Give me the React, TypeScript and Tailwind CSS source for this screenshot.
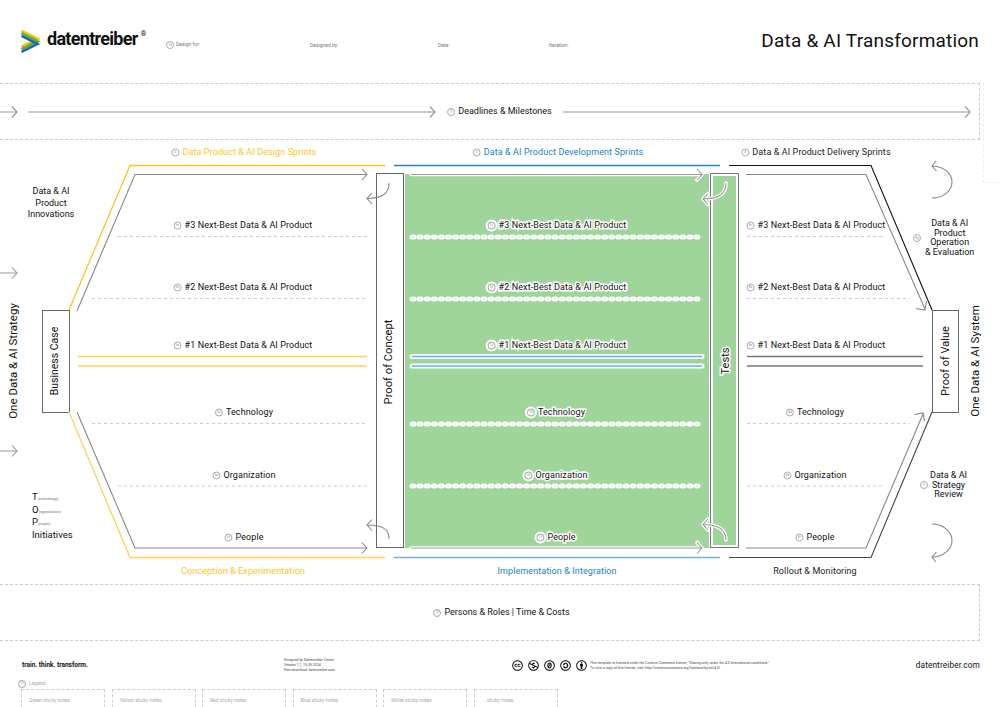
import { ReactNode } from "react";
import {
  FaCreativeCommons,
  FaCreativeCommonsBy,
  FaCreativeCommonsNc,
  FaCreativeCommonsSa,
  FaCreativeCommonsZero,
} from "react-icons/fa";

const halo = "[paint-order:stroke_fill] [-webkit-text-stroke:3px_#fff]";
const stickyNotes = ["Green sticky notes", "Yellow sticky notes", "Red sticky notes", "Blue sticky notes", "White sticky notes", "... sticky notes"];

function Num({ n, white }: { n: string; white?: boolean }) {
  return (
    <span className={`inline-flex w-[8px] h-[8px] shrink-0 items-center justify-center rounded-full border-[0.7px] border-[#aaa] text-[3px] leading-none text-[#888] ${white ? "bg-white outline-2 outline-white" : ""}`}>
      {n}
    </span>
  );
}

function Label({ n, className, children, halo: hasHalo }: { n?: string; className: string; children: ReactNode; halo?: boolean }) {
  return (
    <div className={`absolute -translate-x-1/2 -translate-y-1/2 flex items-center gap-[3px] whitespace-nowrap text-[9px] leading-none tracking-[0.1px] ${className}`}>
      {n && <Num n={n} white={hasHalo} />}
      <span className={hasHalo ? halo : ""}>{children}</span>
    </div>
  );
}

function Vertical({ className, children }: { className: string; children: ReactNode }) {
  return (
    <div className={`absolute -translate-x-1/2 -translate-y-1/2 -rotate-90 whitespace-nowrap leading-none ${className}`}>
      {children}
    </div>
  );
}

function LongArrow({ width }: { width: number }) {
  return (
    <svg width={width} height={14} viewBox={`0 0 ${width} 14`} className="shrink-0">
      <path d={`M0 7H${width - 1}M${width - 6} 1.5L${width - 1} 7L${width - 6} 12.5`} fill="none" stroke="#999" strokeWidth="1.2" />
    </svg>
  );
}

function Logo() {
  return (
    <svg width="22" height="26" viewBox="21 29 22 26" className="shrink-0">
      <polyline points="21.5,31 37.5,39 21.5,47" fill="none" stroke="#fdb913" strokeWidth="3" />
      <polyline points="21.5,33.5 37.5,41.5 21.5,49.5" fill="none" stroke="#58b32f" strokeWidth="3" />
      <polyline points="21.5,36 37.5,44 21.5,52" fill="none" stroke="#1a5fd6" strokeWidth="2.4" />
    </svg>
  );
}

function Lines() {
  return (
    <svg className="absolute left-0 top-0" width="1000" height="444" viewBox="0 140 1000 444">
      {/* incoming arrows */}
      <g fill="none" stroke="#999" strokeWidth="1.1">
        <path d="M0 273H17M12 267.5L17 273L12 278.5" />
        <path d="M0 451H17M12 445.5L17 451L12 456.5" />
      </g>

      {/* sprint outlines */}
      <g fill="none" strokeWidth="1.3">
        <path d="M69 310L130 165.5H385" stroke="#f9c623" />
        <path d="M69 412L130 557.5H385" stroke="#fbd35a" />
        <path d="M394 165.5H720" stroke="#1f85c9" />
        <path d="M394 557.5H720" stroke="#6fb2e0" />
      </g>
      <g fill="none" strokeWidth="1.1">
        <path d="M729 165.5H871L932 310" stroke="#111" />
        <path d="M729 557.5H871L932 412" stroke="#444" />
      </g>

      {/* gray flow arrows, left and right */}
      <g fill="none" stroke="#888" strokeWidth="1.1">
        <path d="M77 311L135 174.5H367M362 169L367 174.5L362 180" />
        <path d="M77 412L135 548H367M362 542.5L367 548L362 553.5" />
        <path d="M746 174.5H866L925 309M916 308.5L925 310L926.5 301" />
        <path d="M746 548H866L923 414M914.5 414.5L923 413L924.5 421.5" />
        <path d="M389 183C389 194 382 198 367 198.5M372 193L367 198.5L372 204" />
        <path d="M389 539C389 530 384 525 367 525M372 519.5L367 525L372 530.5" />
        <path d="M932 166A20 16 0 0 1 932 198M936 161L932 166L936.5 171" />
        <path d="M932 524A20 16.5 0 0 1 932 557M936.5 552L932 557L936 562" />
      </g>

      {/* dashed rows */}
      <g stroke="#ccc" strokeWidth="1" strokeDasharray="3 3">
        <path d="M118 236.5H367M92 298.5H367M92 423.5H367M118 486H367" />
        <path d="M747 236.5H883M747 298.5H910M747 423.5H910M747 486H883" />
      </g>

      {/* #1 product rows */}
      <path d="M78 356.5H367M78 366H367" stroke="#fbd35a" strokeWidth="1.4" />
      <path d="M747 356.5H923M747 366H923" stroke="#777" strokeWidth="1.4" />

      {/* rows on the green panel */}
      <g fill="none" stroke="#fff" strokeWidth="5" strokeLinecap="round" strokeDasharray="2 5.1">
        <path d="M412 237H703M412 299H703M412 424H703M412 486H703" />
      </g>
      <g fill="none" stroke="#e2e2e2" strokeWidth="1" strokeDasharray="3.5 3.6" strokeDashoffset="0.7">
        <path d="M412 237H703M412 299H703M412 424H703M412 486H703" />
      </g>
      <path d="M412 356.5H702M412 366H702" stroke="#fff" strokeWidth="5" strokeLinecap="round" />
      <path d="M412 356.5H702M412 366H702" stroke="#69ade2" strokeWidth="1.6" />

      {/* arrows on the green panel, white under gray */}
      <g fill="none" stroke="#fff" strokeWidth="3.6" strokeLinecap="round" strokeLinejoin="round">
        <path d="M411 174.5H702M697 169L702 174.5L697 180" />
        <path d="M411 548H702M697 542.5L702 548L697 553.5" />
        <path d="M726 183C726 194 719 198.5 703 199M708 193.5L703 199L708 204.5" />
        <path d="M726 540C726 531 720 524.5 703 524.5M708 519L703 524.5L708 530" />
      </g>
      <g fill="none" stroke="#999" strokeWidth="1.1">
        <path d="M411 174.5H702M697 169L702 174.5L697 180" />
        <path d="M411 548H702M697 542.5L702 548L697 553.5" />
        <path d="M726 183C726 194 719 198.5 703 199M708 193.5L703 199L708 204.5" />
        <path d="M726 540C726 531 720 524.5 703 524.5M708 519L703 524.5L708 530" />
      </g>
    </svg>
  );
}

function Diagram() {
  return (
    <div className="relative h-[444px] shrink-0">
      {/* panels and boxes */}
      <div className="absolute left-[405px] top-[34px] h-[374px] w-[304px] bg-[#9fd49b]" />
      <div className="absolute left-[710px] top-[33px] h-[375px] w-[29px] border border-[#777] bg-[#9fd49b] outline-2 -outline-offset-3 outline-white" />
      <div className="absolute left-[376px] top-[33px] h-[375px] w-[28px] border border-[#666] bg-white" />
      <div className="absolute left-[42px] top-[170px] h-[103px] w-[28px] border border-[#666] bg-white" />
      <div className="absolute left-[932px] top-[170px] h-[103px] w-[27px] border border-[#666] bg-white" />

      <Lines />

      {/* section titles */}
      <Label n="6" className="left-[244px] top-[12px] text-[#f9c623]">Data Product &amp; AI Design Sprints</Label>
      <Label n="7" className="left-[558px] top-[12px] text-[#1a7fc4]">Data &amp; AI Product Development Sprints</Label>
      <Label n="8" className="left-[816px] top-[12px] text-[#222]">Data &amp; AI Product Delivery Sprints</Label>
      <Label className="left-[243px] top-[431px] text-[#f9c623]">Conception &amp; Experimentation</Label>
      <Label className="left-[557px] top-[431px] text-[#1a7fc4]">Implementation &amp; Integration</Label>
      <Label className="left-[815px] top-[431px] text-[#222]">Rollout &amp; Monitoring</Label>

      {/* design column */}
      <Label n="6c" className="left-[243px] top-[85px]">#3 Next-Best Data &amp; AI Product</Label>
      <Label n="6b" className="left-[243px] top-[147px]">#2 Next-Best Data &amp; AI Product</Label>
      <Label n="6a" className="left-[243px] top-[205px]">#1 Next-Best Data &amp; AI Product</Label>
      <Label n="6d" className="left-[244px] top-[272px]">Technology</Label>
      <Label n="6e" className="left-[244px] top-[335px]">Organization</Label>
      <Label n="6f" className="left-[244px] top-[397px]">People</Label>

      {/* development column */}
      <Label halo n="7c" className="left-[557px] top-[85px]">#3 Next-Best Data &amp; AI Product</Label>
      <Label halo n="7b" className="left-[557px] top-[147px]">#2 Next-Best Data &amp; AI Product</Label>
      <Label halo n="7a" className="left-[557px] top-[205px]">#1 Next-Best Data &amp; AI Product</Label>
      <Label halo n="7d" className="left-[556px] top-[272px]">Technology</Label>
      <Label halo n="7e" className="left-[556px] top-[335px]">Organization</Label>
      <Label halo n="7f" className="left-[556px] top-[397px]">People</Label>

      {/* delivery column */}
      <Label n="8c" className="left-[816px] top-[85px]">#3 Next-Best Data &amp; AI Product</Label>
      <Label n="8b" className="left-[816px] top-[147px]">#2 Next-Best Data &amp; AI Product</Label>
      <Label n="8a" className="left-[816px] top-[205px]">#1 Next-Best Data &amp; AI Product</Label>
      <Label n="8d" className="left-[815px] top-[272px]">Technology</Label>
      <Label n="8e" className="left-[815px] top-[335px]">Organization</Label>
      <Label n="8f" className="left-[815px] top-[397px]">People</Label>

      {/* side notes */}
      <div className="absolute left-[51px] top-[46px] -translate-x-1/2 text-center text-[9px] leading-[11.5px]">
        Data &amp; AI<br />Product<br />Innovations
      </div>
      <div className="absolute left-[32px] top-[351px] text-[9.5px] leading-[12.5px]">
        <div className="h-[12.5px]">T<span className="text-[4px] text-[#777]">(echnology)</span></div>
        <div className="h-[12.5px]">O<span className="text-[4px] text-[#777]">(rganization)</span></div>
        <div className="h-[12.5px]">P<span className="text-[4px] text-[#777]">(eople)</span></div>
        <div className="h-[12.5px]">Initiatives</div>
      </div>
      <div className="absolute left-[913px] top-[79px] flex items-center gap-[4px]">
        <Num n="8g" />
        <div className="text-center text-[9px] leading-[9.5px]">
          Data &amp; AI<br />Product<br />Operation<br />&amp; Evaluation
        </div>
      </div>
      <div className="absolute left-[920px] top-[331px] flex items-center gap-[2px]">
        <Num n="9" />
        <div className="text-center text-[9px] leading-[9.5px]">
          Data &amp; AI<br />Strategy<br />Review
        </div>
      </div>

      {/* rotated titles */}
      <Vertical className="left-[14px] top-[221px] text-[11.5px]">One Data &amp; AI Strategy</Vertical>
      <Vertical className="left-[55px] top-[221px] text-[10.5px]">Business Case</Vertical>
      <Vertical className="left-[389px] top-[222px] text-[11.2px]">Proof of Concept</Vertical>
      <Vertical className={`left-[725px] top-[221px] text-[11px] ${halo}`}>Tests</Vertical>
      <Vertical className="left-[945px] top-[221px] text-[11px]">Proof of Value</Vertical>
      <Vertical className="left-[976px] top-[221px] text-[11.5px]">One Data &amp; AI System</Vertical>
    </div>
  );
}

export default function App() {
  return (
    <div className="relative flex h-[707px] w-[1000px] flex-col overflow-hidden bg-white text-[#111] [font-family:Roboto,sans-serif]">
      {/* Header */}
      <header className="flex h-[83px] shrink-0 pl-[21px] pr-[21px] pt-[29px]">
        <Logo />
        <div className="ml-[4px] flex h-[20px] w-[119px] shrink-0 items-start">
          <span className="text-[18px] font-bold leading-[20px] tracking-[-0.7px]">datentreiber</span>
          <span className="ml-[3px] text-[7px] font-bold leading-[10px]">®</span>
        </div>
        <div className="mt-[12px] flex h-[8px] w-[144px] shrink-0 items-center gap-[2px] text-[5px] text-[#777]">
          <Num n="14" />
          <span>Design for:</span>
        </div>
        <div className="mt-[12px] h-[8px] w-[128px] shrink-0 text-[5px] leading-[8px] text-[#777]">Designed by:</div>
        <div className="mt-[12px] h-[8px] w-[111px] shrink-0 text-[5px] leading-[8px] text-[#777]">Date:</div>
        <div className="mt-[12px] h-[8px] w-[100px] shrink-0 text-[5px] leading-[8px] text-[#777]">Iteration:</div>
        <h1 className="ml-auto h-[24px] text-[19px] leading-[24px] tracking-[0.2px]">Data &amp; AI Transformation</h1>
      </header>

      {/* Deadlines */}
      <section className="relative flex h-[57px] w-[980px] shrink-0 items-center border-y border-r border-dashed border-[#ccc] pr-[8px]">
        <LongArrow width={18} />
        <div className="ml-[10px]"><LongArrow width={408} /></div>
        <div className="flex w-[127px] shrink-0 items-center justify-center gap-[3px] text-[9px]">
          <Num n="5" />
          <span>Deadlines &amp; Milestones</span>
        </div>
        <LongArrow width={408} />
      </section>
      <div className="absolute left-[983px] top-[83px] h-[100px] w-[17px] border-b border-l border-dashed border-[#eee]" />

      <Diagram />

      {/* Persons and costs */}
      <section className="flex h-[57px] w-[980px] shrink-0 items-center justify-center gap-[3px] border-y border-r border-dashed border-[#ccc] pl-[24px] text-[9px]">
        <Num n="10" />
        <span>Persons &amp; Roles | Time &amp; Costs</span>
      </section>

      {/* Footer */}
      <footer className="flex h-[37px] shrink-0 items-center pl-[22px] pr-[20px] pt-[12px]">
        <span className="w-[262px] shrink-0 text-[6.5px] font-bold">train. think. transform.</span>
        <div className="w-[228px] shrink-0 text-[3.5px] leading-[5px] text-[#444]">
          Designed by Datentreiber Center<br />Version 1.1, 15.05.2024<br />Free download: datentreiber.com
        </div>
        <div className="flex w-[78px] shrink-0 items-center gap-[5px] text-[11px]">
          <FaCreativeCommons className="shrink-0" />
          <FaCreativeCommonsNc className="shrink-0" />
          <FaCreativeCommonsZero className="shrink-0" />
          <FaCreativeCommonsSa className="shrink-0" />
          <FaCreativeCommonsBy className="shrink-0" />
        </div>
        <div className="text-[3.5px] leading-[5px] text-[#444]">
          This template is licensed under the Creative Commons license, "Sharing only under the 4.0 International conditions."<br />
          To view a copy of this license, visit: http://creativecommons.org/licenses/by-sa/4.0/
        </div>
        <span className="ml-auto text-[8.3px] tracking-[0.1px]">datentreiber.com</span>
      </footer>

      {/* Legend */}
      <div className="flex h-[11px] shrink-0 items-center gap-[3px] pl-[18px] text-[5px] text-[#aaa]">
        <Num n="15" />
        <span>Legend:</span>
      </div>
      <div className="flex shrink-0 gap-[6.5px] pl-[21px]">
        {stickyNotes.map((note) => (
          <div key={note} className="h-[40px] w-[84px] border border-dashed border-[#ccc] pl-[7px] pt-[7px] text-[5px] text-[#aaa]">
            {note}
          </div>
        ))}
      </div>
    </div>
  );
}
